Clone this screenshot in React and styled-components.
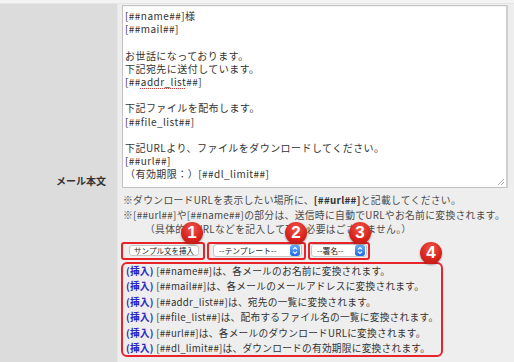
import React from 'react';
import styled, { createGlobalStyle } from 'styled-components';

const GlobalStyle = createGlobalStyle`
  html, body {
    margin: 0;
    padding: 0;
    background: #eeeeee;
    font-family: 'Noto Sans CJK JP', 'Noto Sans', sans-serif;
    color: #333;
  }
`;

const bodyLines = [
  '[##name##]様',
  '[##mail##]',
  '',
  'お世話になっております。',
  '下記宛先に送付しています。',
  'ADDR',
  '',
  '下記ファイルを配布します。',
  '[##file_list##]',
  '',
  '下記URLより、ファイルをダウンロードしてください。',
  '[##url##]',
  '（有効期限：）[##dl_limit##]',
];

const tags = [
  ['[##name##]', 'は、各メールのお名前に変換されます。'],
  ['[##mail##]', 'は、各メールのメールアドレスに変換されます。'],
  ['[##addr_list##]', 'は、宛先の一覧に変換されます。'],
  ['[##file_list##]', 'は、配布するファイル名の一覧に変換されます。'],
  ['[##url##]', 'は、各メールのダウンロードURLに変換されます。'],
  ['[##dl_limit##]', 'は、ダウンロードの有効期限に変換されます。'],
];

function Stepper() {
  return (
    <svg width="10" height="11" viewBox="0 0 10 11">
      <defs>
        <linearGradient id="stp" x1="0" y1="0" x2="0" y2="1">
          <stop offset="0" stopColor="#6aaefc" />
          <stop offset="1" stopColor="#1f6ae6" />
        </linearGradient>
      </defs>
      <rect x="0" y="0" width="10" height="11" rx="2.5" fill="url(#stp)" />
      <path d="M3 4.3 L5 2.5 L7 4.3" stroke="#fff" strokeWidth="1.1" fill="none" />
      <path d="M3 6.7 L5 8.5 L7 6.7" stroke="#fff" strokeWidth="1.1" fill="none" />
    </svg>
  );
}

function Grip() {
  return (
    <GripSvg width="8" height="8" viewBox="0 0 8 8">
      <path d="M1 7 L7 1 M4 7 L7 4" stroke="#9a9a9a" strokeWidth="0.8" />
    </GripSvg>
  );
}

export default function App() {
  return (
    <>
      <GlobalStyle />
      <TopStrip />
      <Row>
        <LabelCell>メール本文</LabelCell>
        <ContentCell>
          <TextBox>
            {bodyLines.map((l, i) => (
              <Line key={i}>
                {l === 'ADDR' ? (
                  <>[##<Misspelled>addr_list</Misspelled>##]</>
                ) : (
                  l || '\u00a0'
                )}
              </Line>
            ))}
            <Grip />
          </TextBox>
          <Notes>
            <div>※ダウンロードURLを表示したい場所に、<b>[##url##]</b>と記載してください。</div>
            <div>※[##url##]や[##name##]の部分は、送信時に自動でURLやお名前に変換されます。</div>
            <Indent>（具体的なURLなどを記入して頂く必要はございません。）</Indent>
          </Notes>
          <Controls>
            <Highlight $pad="1px 4px 1px 6px">
              <Button>サンプル文を挿入</Button>
              <Badge $right={0}>1</Badge>
            </Highlight>
            <Highlight $pad="1px 2px 1px 4px">
              <Select $width={89}>
                <span>--テンプレート--</span>
                <Stepper />
              </Select>
              <Badge $right={-3}>2</Badge>
            </Highlight>
            <Highlight $pad="1px 1px 1px 1px">
              <Select $width={56}>
                <span>--署名--</span>
                <Stepper />
              </Select>
              <Badge $right={-3}>3</Badge>
            </Highlight>
          </Controls>
          <TagBox>
            {tags.map(([tag, text]) => (
              <TagLine key={tag}>
                <Insert>(挿入)</Insert> {tag}
                {text}
              </TagLine>
            ))}
            <Badge $right={-1} $top={-22}>4</Badge>
          </TagBox>
        </ContentCell>
      </Row>
    </>
  );
}

const TopStrip = styled.div`
  height: 4px;
  background: #f3f3f3;
  border-bottom: 1px solid #e4e4e4;
  box-sizing: border-box;
`;

const Row = styled.div`
  display: grid;
  grid-template-columns: 118px 1fr;
  min-height: 358px;
`;

const LabelCell = styled.div`
  background: #dcdcdc;
  border-right: 1px solid #e8e8e8;
  display: flex;
  align-items: center;
  justify-content: flex-end;
  padding: 0 11px 6px 0;
  font-size: 10px;
  font-weight: bold;
  color: #333;
`;

const ContentCell = styled.div`
  padding: 1px 6px 0 3px;
  background: #eeeeee;
  min-width: 0;
`;

const TextBox = styled.div`
  position: relative;
  margin-left: 1px;
  height: 183px;
  box-sizing: border-box;
  background: #fff;
  border: 1px solid #c2c2c2;
  border-right: 2px solid #cfcfcf;
  box-shadow: inset 0 1px 1px rgba(0, 0, 0, 0.06);
  padding: 3px 2px;
  font-size: 10px;
  letter-spacing: 0.45px;
  line-height: 13.2px;
  color: #333;
  overflow: hidden;
`;

const Line = styled.div`
  white-space: pre;
`;

const Misspelled = styled.span`
  text-decoration: underline dotted #e03030;
  text-underline-offset: 2px;
`;

const GripSvg = styled.svg`
  position: absolute;
  right: 1px;
  bottom: 1px;
`;

const Notes = styled.div`
  margin-top: 5px;
  padding-left: 2px;
  font-size: 9.8px;
  letter-spacing: 0.3px;
  line-height: 14.5px;
  color: #4a4a4a;
  white-space: nowrap;
  b {
    color: #333;
  }
`;

const Indent = styled.div`
  padding-left: 22px;
`;

const Controls = styled.div`
  display: flex;
  gap: 2px;
  margin-top: 5px;
`;

const Highlight = styled.div`
  position: relative;
  display: flex;
  align-items: center;
  height: 18px;
  box-sizing: border-box;
  padding: ${(p) => p.$pad};
  border: 2px solid #e8232a;
  border-radius: 3px;
`;

const Button = styled.div`
  height: 11px;
  width: 70px;
  box-sizing: border-box;
  display: flex;
  align-items: center;
  justify-content: center;
  background: #fff;
  border: 1px solid #c6c6c6;
  border-radius: 3px;
  font-size: 7.5px;
  color: #222;
`;

const Select = styled.div`
  width: ${(p) => p.$width}px;
  height: 13px;
  box-sizing: border-box;
  display: flex;
  align-items: center;
  justify-content: space-between;
  padding: 0 1px 0 5px;
  background: #fff;
  border: 1px solid #c6c6c6;
  border-radius: 3px;
  font-size: 7.8px;
  color: #222;
  span {
    white-space: nowrap;
  }
`;

const Badge = styled.div`
  position: absolute;
  top: ${(p) => (p.$top !== undefined ? p.$top : -22)}px;
  right: ${(p) => p.$right}px;
  width: 22px;
  height: 22px;
  border-radius: 50%;
  background: radial-gradient(circle at 50% 30%, #f0574c 0%, #d9241f 55%, #b8130f 100%);
  box-shadow: 0 1px 2px rgba(0, 0, 0, 0.35);
  color: #fff;
  font-family: 'Liberation Sans', Arial, sans-serif;
  font-weight: bold;
  font-size: 17px;
  line-height: 22px;
  text-align: center;
  letter-spacing: 0;
  z-index: 2;
`;

const TagBox = styled.div`
  position: relative;
  margin-top: 2px;
  width: 322px;
  height: 95px;
  box-sizing: border-box;
  border: 2px solid #e8232a;
  border-radius: 6px;
  padding: 0 0 0 3px;
`;

const TagLine = styled.div`
  font-size: 9.7px;
  letter-spacing: 0.25px;
  line-height: 15.6px;
  color: #333;
  white-space: nowrap;
`;

const Insert = styled.span`
  color: #2626c8;
  font-weight: bold;
`;
